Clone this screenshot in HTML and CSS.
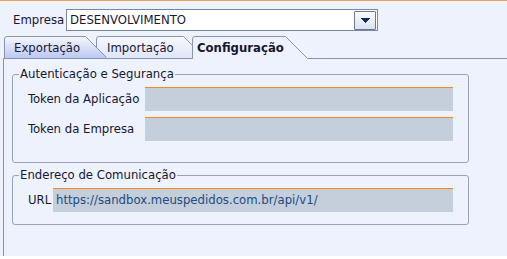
FILE: index.html
```html
<!DOCTYPE html>
<html lang="pt-BR">
<head>
  <meta charset="UTF-8" />
  <title>Configuração</title>
  <link rel="stylesheet" href="styles.css">
</head>
<body>
  <div class="window">
    <div class="header">
      <span class="lbl lbl-empresa">Empresa</span>
      <div class="combo">
        <span class="combo-text">DESENVOLVIMENTO</span>
        <span class="combo-btn">
          <svg width="9" height="5" viewBox="0 0 9 5"><path d="M0 0H9V1H8V2H7V3H6V4H5V5H4V4H3V3H2V2H1V1H0Z" fill="#102a5c"/></svg>
        </span>
      </div>
    </div>

    <div class="tabs">
      <div class="tab tab-exp">
        <svg class="tab-shape" width="103" height="22" viewBox="0 0 103 22">
          <defs>
            <linearGradient id="gExp" x1="0" y1="0" x2="0" y2="1">
              <stop offset="0" stop-color="#f7f8fe"/>
              <stop offset="1" stop-color="#bcc7f3"/>
            </linearGradient>
          </defs>
          <path d="M0.5 22V3Q0.5 0.5 3 0.5H81.5L102.5 21.5V22Z" fill="url(#gExp)"/>
          <path d="M0.5 22V3Q0.5 0.5 3 0.5H81.5L102.5 21.5" fill="none" stroke="#8794b4"/>
        </svg>
        <span class="tab-label">Exportação</span>
      </div>
      <div class="tab tab-imp">
        <svg class="tab-shape" width="109" height="22" viewBox="0 0 109 22">
          <defs>
            <linearGradient id="gImp" x1="0" y1="0" x2="0" y2="1">
              <stop offset="0" stop-color="#f8f9fe"/>
              <stop offset="1" stop-color="#dfe5f7"/>
            </linearGradient>
          </defs>
          <path d="M0.5 22V3Q0.5 0.5 3 0.5H87.5L108.5 21.5V22Z" fill="url(#gImp)"/>
          <path d="M0.5 22V3Q0.5 0.5 3 0.5H87.5L108.5 21.5" fill="none" stroke="#8794b4"/>
        </svg>
        <span class="tab-label">Importação</span>
      </div>
      <div class="tab tab-active">
        <svg class="tab-shape" width="116" height="23" viewBox="0 0 116 23">
          <path d="M0.5 23V3Q0.5 0.5 3 0.5H93.5L115.5 22.5V23Z" fill="#eef2fd"/>
          <path d="M0.5 23V3Q0.5 0.5 3 0.5H93.5L115.5 22.5" fill="none" stroke="#8794b4"/>
        </svg>
        <span class="tab-label">Configuração</span>
      </div>
    </div>

    <div class="panel">
      <fieldset class="group group-auth">
        <legend>Autenticação e Segurança</legend>
        <div class="row">
          <span class="lbl lbl-token">Token da Aplicação</span>
          <div class="field field-token"></div>
        </div>
        <div class="row">
          <span class="lbl lbl-token">Token da Empresa</span>
          <div class="field field-token"></div>
        </div>
      </fieldset>

      <fieldset class="group group-url">
        <legend>Endereço de Comunicação</legend>
        <div class="row">
          <span class="lbl lbl-url">URL</span>
          <div class="field field-url">https://sandbox.meuspedidos.com.br/api/v1/</div>
        </div>
      </fieldset>
    </div>
  </div>
</body>
</html>
```

FILE: styles.css
```css
html, body {
  margin: 0;
  background: #fff;
}
body {
  font-family: "DejaVu Sans Condensed", "DejaVu Sans", sans-serif;
  font-size: 13px;
  line-height: 16px;
  color: #17172f;
}
.window {
  height: 256px;
  box-sizing: border-box;
  border-top: 1px solid #eba15a;
  background: #eef2fd;
  overflow: hidden;
}
.header {
  display: flex;
  align-items: center;
  padding: 8px 0 0 13px;
}
.lbl-empresa {
  width: 53px;
}
.combo {
  display: flex;
  align-items: center;
  justify-content: space-between;
  width: 312px;
  height: 22px;
  box-sizing: border-box;
  border: 1px solid #7686a8;
  background: #fff;
}
.combo-text {
  padding-left: 3px;
}
.combo-btn {
  display: flex;
  align-items: center;
  justify-content: center;
  width: 22px;
  height: 19px;
  box-sizing: border-box;
  margin-right: 1px;
  border: 1px solid #6c7896;
  border-radius: 1px;
  background: linear-gradient(#fbfcff, #dbe1f2);
}

/* abas */
.tabs {
  display: flex;
  height: 22px;
  margin: 5px 0 0 4px;
}
.tab {
  position: relative;
  height: 22px;
}
.tab-shape {
  position: absolute;
  left: 0;
  top: 0;
}
.tab-label {
  position: relative;
  display: block;
  padding-top: 4px;
}
.tab-exp {
  width: 103px;
  z-index: 3;
}
.tab-exp .tab-label {
  padding-left: 10px;
}
.tab-imp {
  width: 109px;
  margin-left: -11px;
  z-index: 2;
}
.tab-imp .tab-label {
  padding-left: 11px;
}
.tab-active {
  width: 116px;
  height: 23px;
  margin-left: -13px;
  z-index: 4;
}
.tab-active .tab-label {
  padding-left: 5px;
  font-weight: bold;
}

/* painel */
.panel {
  height: 198px;
  box-sizing: border-box;
  margin-left: 3px;
  border-left: 1px solid #8794b4;
  border-top: 1px solid #8794b4;
  padding-top: 7px;
}
.group {
  width: 457px;
  box-sizing: border-box;
  margin: 0 0 0 8px;
  padding: 0;
  border: 1px solid #97a2bb;
  border-radius: 3px;
}
.group legend {
  margin-left: 6px;
  padding: 0 1px;
}
.group-auth {
  padding: 5px 0 21px;
}
.group-url {
  margin-top: 4px;
  padding: 5px 0 12px;
}
.row {
  display: flex;
  align-items: center;
  padding-left: 15px;
}
.row + .row {
  margin-top: 6px;
}
.lbl-token {
  width: 117px;
}
.lbl-url {
  width: 25px;
}
.field {
  height: 24px;
  box-sizing: border-box;
  border-top: 1px solid #f7891d;
  background: #c4cfdb;
  color: #1f4a80;
  padding: 3px 0 0 3px;
}
.field-token {
  width: 308px;
}
.field-url {
  width: 400px;
}
```
